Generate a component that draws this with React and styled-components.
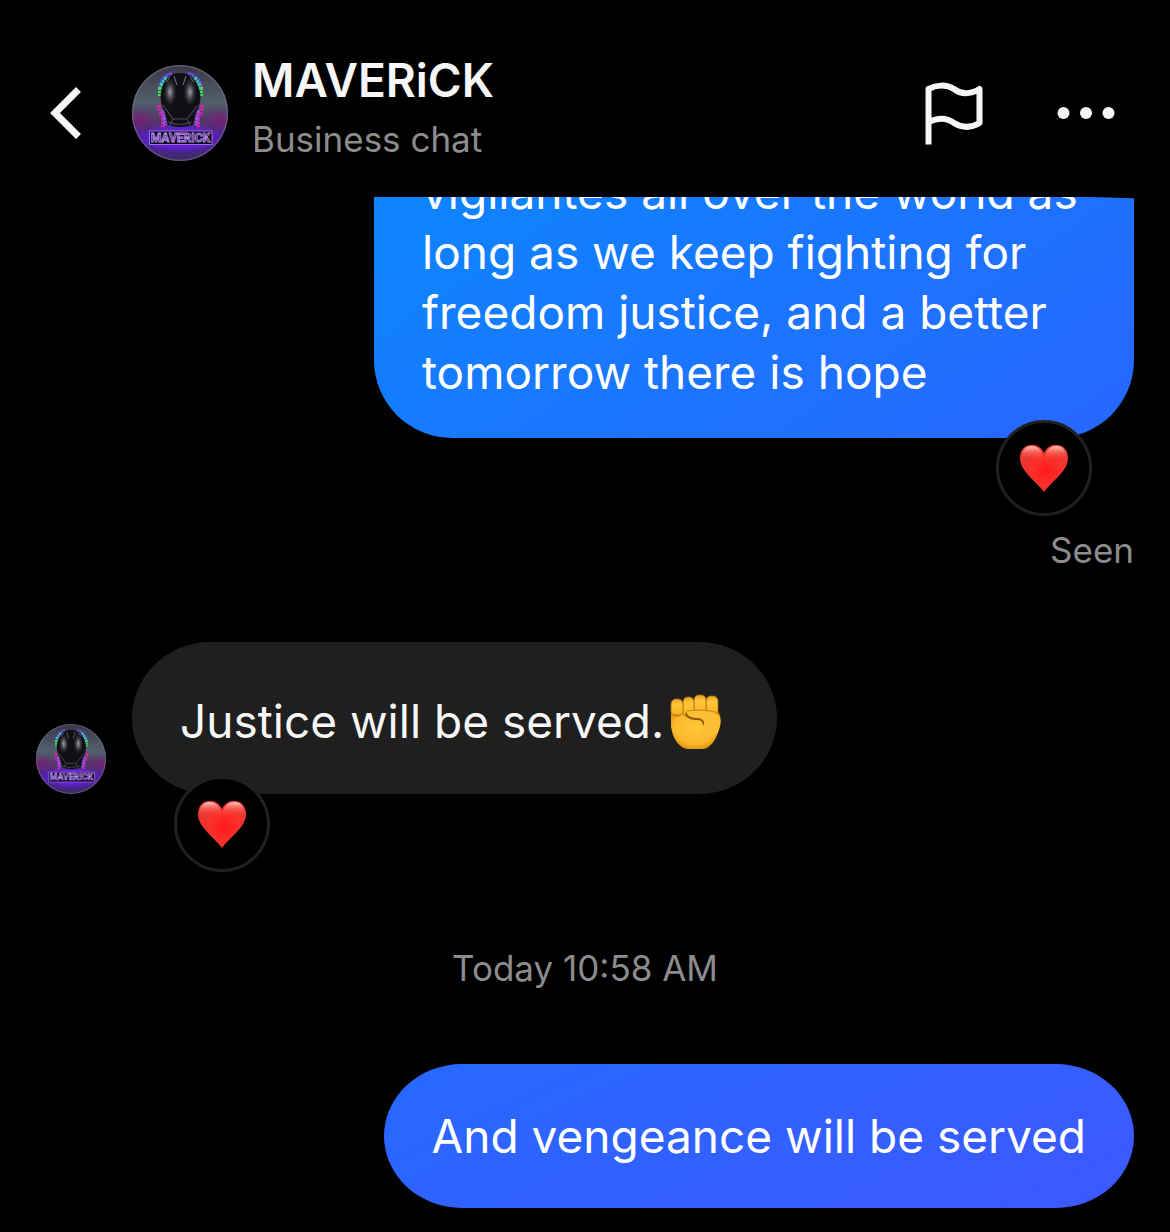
import React from "react"
import styled, { createGlobalStyle, ThemeProvider } from "styled-components"

const theme = {
    colors: {
        background: "#000000",
        bubble: "#1f1f1f",
        ring: "#202020",
        font: {
            light: "#f6f6f6",
            muted: "#8c8c8c",
        },
    },
}

const GlobalStyle = createGlobalStyle`
    * {
        box-sizing: border-box;
    }

    body {
        margin: 0;
        background: #000000;
        font-family: Inter, "Liberation Sans", sans-serif;
    }
`

const StyledChat = styled.div`
    display: flex;
    flex-direction: column;
    height: 100vh;
    color: ${(props) => props.theme.colors.font.light};
    background: ${(props) => props.theme.colors.background};
`

const Header = styled.header`
    display: flex;
    flex-shrink: 0;
    align-items: center;
    gap: 24px;
    padding: 48px 48px 19px 36px;
`

const HeaderText = styled.div`
    flex: 1;
    min-width: 0;
    padding-bottom: 12px;
`

const Title = styled.h1`
    margin: 0;
    font-size: 46px;
    line-height: 64px;
    font-weight: 600;
`

const Subtitle = styled.p`
    margin: 0;
    color: ${(props) => props.theme.colors.font.muted};
    font-size: 35px;
    line-height: 54px;
`

const Actions = styled.div`
    display: flex;
    gap: 60px;
`

const IconButton = styled.button`
    flex-shrink: 0;
    width: 72px;
    height: 72px;
    padding: 0;
    border: 0;
    color: inherit;
    background: none;
    cursor: pointer;

    svg {
        display: block;
        width: 100%;
        height: 100%;
    }
`

const AvatarSvg = styled.svg`
    display: block;
    flex-shrink: 0;
    width: ${(props) => props.$size}px;
    height: ${(props) => props.$size}px;
`

const Messages = styled.main`
    display: flex;
    flex: 1;
    flex-direction: column;
    justify-content: flex-end;
    gap: 70px;
    min-height: 0;
    padding: 0 36px 24px;
    overflow: hidden;
    border-top-right-radius: 100px 6px;
`

const MessageGroup = styled.section`
    display: flex;
    flex-direction: column;
    align-items: ${(props) => (props.$own ? "flex-end" : "flex-start")};
`

const MessageRow = styled.div`
    display: flex;
    align-items: flex-end;
    gap: 26px;
`

const Bubble = styled.p`
    max-width: 760px;
    margin: 0;
    padding: 42px 48px;
    border-radius: 78px / 50%;
    background: ${(props) => props.theme.colors.bubble};
    font-size: 46px;
    line-height: 60px;
`

const OwnBubble = styled(Bubble)`
    color: #ffffff;
    background: linear-gradient(155deg, #2769ff, #3d58ff);
`

const LongBubble = styled(OwnBubble)`
    padding: 36px 48px;
    border-radius: 12px 12px 78px 78px;
    background: linear-gradient(145deg, #0b88ff, #2866ff);
`

const Reaction = styled.button`
    display: grid;
    place-items: center;
    position: relative;
    width: 96px;
    height: 96px;
    margin: -18px 42px 0 ${(props) => (props.$own ? 42 : 138)}px;
    padding: 0;
    border: 3px solid ${(props) => props.theme.colors.ring};
    border-radius: 50%;
    background: ${(props) => props.theme.colors.background};
    cursor: pointer;
`

const Status = styled.span`
    margin-top: 12px;
    color: ${(props) => props.theme.colors.font.muted};
    font-size: 35px;
    line-height: 44px;
`

const Timestamp = styled.time`
    color: ${(props) => props.theme.colors.font.muted};
    font-size: 35px;
    line-height: 52px;
    text-align: center;
`

const FistSvg = styled.svg`
    width: 65px;
    height: 68px;
    vertical-align: -14px;
`

const Avatar = ({ size, id }) => (
    <AvatarSvg $size={size} viewBox="0 0 96 96" role="img" aria-label="MAVERiCK">
        <defs>
            <linearGradient id={`${id}-back`} x1="0" y1="0" x2="0" y2="1">
                <stop offset="0" stopColor="#3a3648" />
                <stop offset="0.38" stopColor="#53606c" />
                <stop offset="0.58" stopColor="#4b3a66" />
                <stop offset="0.76" stopColor="#4c1fa0" />
                <stop offset="1" stopColor="#3f2a68" />
            </linearGradient>
            <radialGradient id={`${id}-side`}>
                <stop offset="0" stopColor="#86167e" stopOpacity="0.7" />
                <stop offset="1" stopColor="#86167e" stopOpacity="0" />
            </radialGradient>
            <radialGradient id={`${id}-glow`}>
                <stop offset="0" stopColor="#7a22ff" />
                <stop offset="0.65" stopColor="#6420e0" stopOpacity="0.8" />
                <stop offset="1" stopColor="#6a1be0" stopOpacity="0" />
            </radialGradient>
            <radialGradient id={`${id}-shine`}>
                <stop offset="0" stopColor="#a8a5b2" />
                <stop offset="1" stopColor="#2a2830" stopOpacity="0" />
            </radialGradient>
            <clipPath id={`${id}-clip`}>
                <circle cx="48" cy="48" r="48" />
            </clipPath>
        </defs>
        <g clipPath={`url(#${id}-clip)`}>
            <rect width="96" height="96" fill={`url(#${id}-back)`} />
            <ellipse cx="6" cy="55" rx="24" ry="13" fill={`url(#${id}-side)`} />
            <ellipse cx="90" cy="55" rx="24" ry="13" fill={`url(#${id}-side)`} />
            <ellipse cx="48" cy="73" rx="44" ry="15" fill={`url(#${id}-glow)`} />
            <g fill="none" strokeWidth="4" strokeDasharray="3 1 2 1">
                <path d="M40 9 Q30 11 28 23" stroke="#6b4df0" />
                <path d="M56 9 Q67 11 69 23" stroke="#6b4df0" />
                <path d="M35 13 Q31 16 29 22" stroke="#39d8c6" />
                <path d="M62 13 Q66 16 68 22" stroke="#35c9a5" />
                <path d="M28 22 L28 31" stroke="#42e05a" />
                <path d="M69 22 L69 31" stroke="#42e05a" />
                <path d="M27 40 Q27 47 31 51 L31 62" stroke="#e01fa8" />
                <path d="M70 40 Q70 47 66 51 L66 62" stroke="#e01fa8" />
                <path d="M31 45 L33 60" stroke="#8a54e8" />
                <path d="M66 45 L64 60" stroke="#8a54e8" />
            </g>
            <path d="M48 8 C38 8 31 15 29 27 Q27 37 33 48 L36 60 Q48 64 61 60 L64 48 Q70 37 68 27 C65 15 59 8 48 8 Z" fill="#100f14" />
            <ellipse cx="38" cy="27" rx="7" ry="15" fill={`url(#${id}-shine)`} />
            <ellipse cx="58" cy="27" rx="7" ry="15" fill={`url(#${id}-shine)`} />
            <path d="M42 11 L45 20 M54 11 L51 20 M34 17 L38 12 M62 17 L58 12" stroke="#77727f" strokeWidth="1" />
            <path d="M31 40 L41 54 L55 54 L66 40 M36 57 Q48 62 60 57 M41 54 L38 60 M55 54 L58 60" fill="none" stroke="#4b4655" strokeWidth="1.2" />
            <rect x="17.5" y="66" width="62.5" height="13.5" fill="#0b0415" stroke="#9b70dc" />
            <text x="48.5" y="77" textAnchor="middle" fill="#221038" stroke="#b58aec" strokeWidth="0.9" fontFamily="Roboto, sans-serif" fontSize="12" fontWeight="700">MAVERICK</text>
        </g>
        <circle cx="48" cy="48" r="47.3" fill="none" stroke="#77738a" strokeOpacity="0.6" strokeWidth="1.4" />
    </AvatarSvg>
)

const Heart = ({ id }) => (
    <svg width="50" height="50" viewBox="0 0 50 50" aria-hidden="true">
        <defs>
            <radialGradient id={id} cx="0.54" cy="0.56" r="0.6">
                <stop offset="0" stopColor="#ff1a1c" />
                <stop offset="0.5" stopColor="#fa302b" />
                <stop offset="1" stopColor="#e2382f" />
            </radialGradient>
            <linearGradient id={`${id}-top`} x1="0" y1="0" x2="0" y2="1">
                <stop offset="0" stopColor="#ffd2cc" stopOpacity="0.95" />
                <stop offset="0.45" stopColor="#ff8a82" stopOpacity="0.5" />
                <stop offset="1" stopColor="#ff4a42" stopOpacity="0" />
            </linearGradient>
        </defs>
        <path d="M25 10 C22 4 17 1 12 2 C5 2 1 8 1 15 C1 28 15 36 25 49 C35 36 49 28 49 15 C49 8 45 2 38 2 C33 1 28 4 25 10 Z" fill={`url(#${id})`} />
        <path d="M2 17 C2 7 7 3 12 3 C18 3 22 6 24 12 L24 17 Z M48 17 C48 7 43 3 38 3 C32 3 28 6 26 12 L26 17 Z" fill={`url(#${id}-top)`} />
    </svg>
)

const Fist = () => (
    <FistSvg viewBox="0 0 65 68" role="img" aria-label="Raised fist">
        <defs>
            <radialGradient id="fist-palm" cx="0.48" cy="0.45" r="0.6">
                <stop offset="0" stopColor="#ffc63a" />
                <stop offset="0.7" stopColor="#fbb829" />
                <stop offset="1" stopColor="#dd8a12" />
            </radialGradient>
            <linearGradient id="fist-finger" x1="0" y1="0" x2="0" y2="1">
                <stop offset="0" stopColor="#eca31d" />
                <stop offset="0.3" stopColor="#ffc63a" />
                <stop offset="0.8" stopColor="#fbb829" />
                <stop offset="1" stopColor="#d2830f" />
            </linearGradient>
        </defs>
        <path d="M7 28 L52 26 C57 29 57 35 56 41 C54 54 46 65 39 65 L24 65 C14 64 8 52 7 42 Z" fill="url(#fist-palm)" />
        <g fill="url(#fist-finger)" stroke="#b06f10" strokeWidth="0.8">
            <rect x="42" y="12" width="12" height="20" rx="5" />
            <rect x="30" y="11" width="12" height="20" rx="5" />
            <rect x="19" y="13" width="11" height="20" rx="5" />
            <rect x="7" y="15" width="12" height="17" rx="5" />
        </g>
        <path d="M24 32 C20 28 24 25 29 26 L47 27 C55 28 58 35 56 42 C54 50 49 54 44 54 C37 50 40 43 39 40 C34 36 28 37 24 32 Z" fill="#fdbf33" />
        <path d="M23 27 Q34 25 47 27 Q53 28 55 31" fill="none" stroke="#c07a10" strokeWidth="0.9" />
        <path d="M22 27 C20 33 26 36 32 36 C38 36 39 38 39 42 C42 38 39 34 33 34 C27 34 23 32 22 27 Z" fill="#8f560a" />
    </FistSvg>
)

const App = () => {
    return (
        <ThemeProvider theme={theme}>
            <GlobalStyle />
            <StyledChat>
                <Header>
                    <IconButton type="button" aria-label="Back">
                        <svg viewBox="0 0 72 72" fill="none" stroke="currentColor" strokeWidth="7">
                            <path d="M42.5 12.5 L19 36 L42.5 59.5" />
                        </svg>
                    </IconButton>
                    <Avatar size={96} id="header-avatar" />
                    <HeaderText>
                        <Title>MAVERiCK</Title>
                        <Subtitle>Business chat</Subtitle>
                    </HeaderText>
                    <Actions>
                        <IconButton type="button" aria-label="Report">
                            <svg viewBox="0 0 72 72" fill="none" stroke="currentColor" strokeWidth="6" strokeLinejoin="round">
                                <path d="M10.5 67.5 V12 C18 8 28 7 36 12 C44 18 53 17 61.5 12 V46 C53 51 44 51 36 46 C28 40 19 41 10.5 45" />
                            </svg>
                        </IconButton>
                        <IconButton type="button" aria-label="More">
                            <svg viewBox="0 0 72 72" fill="currentColor">
                                <circle cx="13.5" cy="36" r="6" />
                                <circle cx="36" cy="36" r="6" />
                                <circle cx="58.5" cy="36" r="6" />
                            </svg>
                        </IconButton>
                    </Actions>
                </Header>

                <Messages>
                    <MessageGroup $own>
                        <LongBubble>
                            vigilantes all over the world as long as we keep fighting for freedom justice, and a better tomorrow there is hope
                        </LongBubble>
                        <Reaction $own type="button" aria-label="Heart reaction">
                            <Heart id="heart-own" />
                        </Reaction>
                        <Status>Seen</Status>
                    </MessageGroup>

                    <MessageGroup>
                        <MessageRow>
                            <Avatar size={70} id="row-avatar" />
                            <Bubble>Justice will be served.<Fist /></Bubble>
                        </MessageRow>
                        <Reaction type="button" aria-label="Heart reaction">
                            <Heart id="heart-reply" />
                        </Reaction>
                    </MessageGroup>

                    <Timestamp>Today 10:58 AM</Timestamp>

                    <MessageGroup $own>
                        <OwnBubble>And vengeance will be served</OwnBubble>
                    </MessageGroup>
                </Messages>
            </StyledChat>
        </ThemeProvider>
    )
}

export default App
